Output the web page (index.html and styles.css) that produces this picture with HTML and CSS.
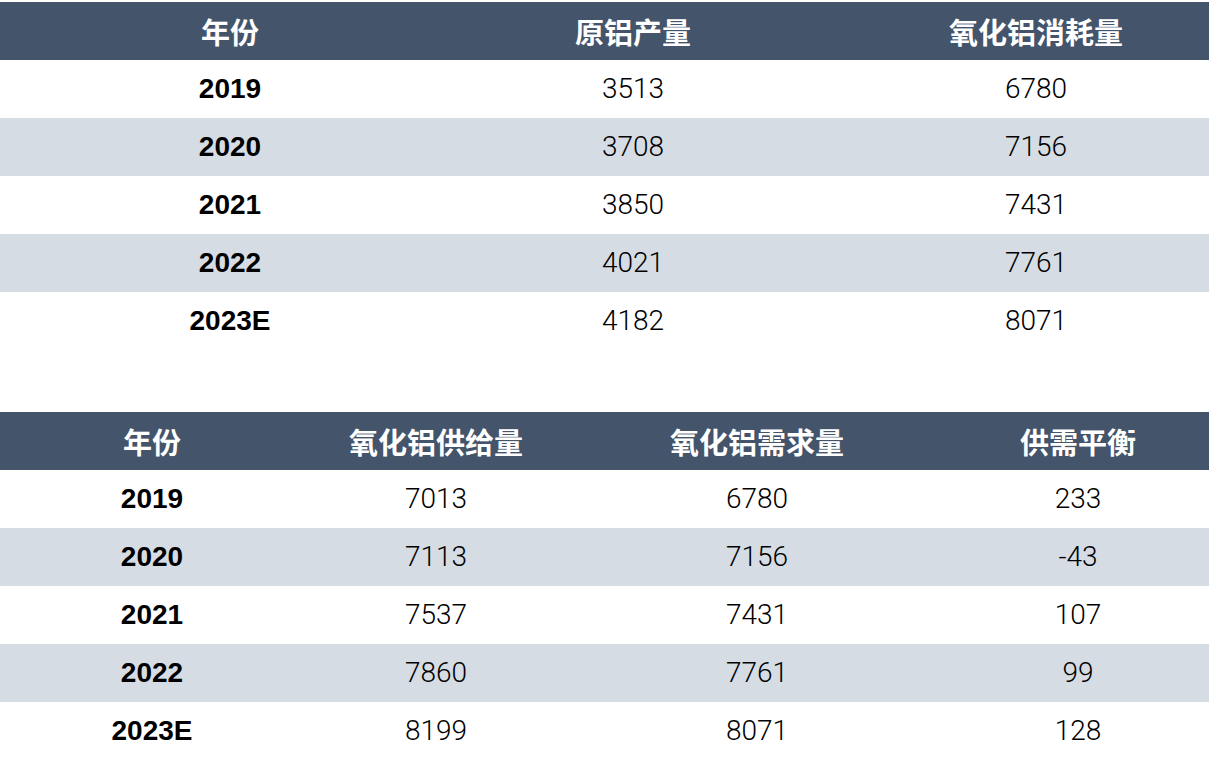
FILE: index.html
```html
<!DOCTYPE html>
<html lang="zh-CN">
<head>
<meta charset="utf-8">
<title>氧化铝供需</title>
<link rel="stylesheet" href="styles.css">
</head>
<body>
<div class="page">
  <table class="grid grid-3">
    <colgroup><col class="c3"><col class="c3"><col class="c3"></colgroup>
    <thead>
      <tr><th>年份</th><th>原铝产量</th><th>氧化铝消耗量</th></tr>
    </thead>
    <tbody>
      <tr><td class="year">2019</td><td>3513</td><td>6780</td></tr>
      <tr class="alt"><td class="year">2020</td><td>3708</td><td>7156</td></tr>
      <tr><td class="year">2021</td><td>3850</td><td>7431</td></tr>
      <tr class="alt"><td class="year">2022</td><td>4021</td><td>7761</td></tr>
      <tr><td class="year">2023E</td><td>4182</td><td>8071</td></tr>
    </tbody>
  </table>

  <table class="grid grid-4">
    <colgroup><col class="c4a"><col class="c4"><col class="c4"><col class="c4"></colgroup>
    <thead>
      <tr><th>年份</th><th>氧化铝供给量</th><th>氧化铝需求量</th><th>供需平衡</th></tr>
    </thead>
    <tbody>
      <tr><td class="year">2019</td><td>7013</td><td>6780</td><td>233</td></tr>
      <tr class="alt"><td class="year">2020</td><td>7113</td><td>7156</td><td>-43</td></tr>
      <tr><td class="year">2021</td><td>7537</td><td>7431</td><td>107</td></tr>
      <tr class="alt"><td class="year">2022</td><td>7860</td><td>7761</td><td>99</td></tr>
      <tr><td class="year">2023E</td><td>8199</td><td>8071</td><td>128</td></tr>
    </tbody>
  </table>
</div>
</body>
</html>
```

FILE: styles.css
```css
html, body {
  margin: 0;
  padding: 0;
  background: #ffffff;
}

.page {
  width: 1209px;
  padding-top: 2px;
  display: flex;
  flex-direction: column;
  gap: 62px;
}

.grid {
  width: 1209px;
  border-collapse: collapse;
  border-spacing: 0;
  table-layout: fixed;
}

.c3 { width: 403px; }
.c4a { width: 247px; }
.c4 { width: 321px; }

.grid th,
.grid td {
  height: 58px;
  padding: 0 0 0 57px;
  text-align: center;
  vertical-align: middle;
  box-sizing: border-box;
  white-space: nowrap;
}

.grid th {
  background: #44546a;
  color: #ffffff;
  font-family: "Noto Sans CJK SC", "Noto Sans", sans-serif;
  font-weight: 700;
  font-size: 29px;
  line-height: 1;
}

.grid td {
  color: #000000;
  font-family: Roboto, "Liberation Sans", sans-serif;
  font-weight: 300;
  font-size: 28px;
  line-height: 1;
}

.grid td.year {
  font-family: "Liberation Sans", Arial, sans-serif;
  font-weight: 700;
  font-size: 28px;
}

.grid tr.alt td {
  background: #d6dce4;
}
```
